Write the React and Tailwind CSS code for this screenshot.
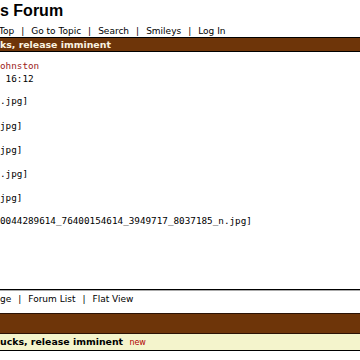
const Sep = () => <span className="mx-[7px]">|</span>;

export default function App() {
  const mono = { fontFamily: '"DejaVu Sans Mono", monospace' };
  return (
    <div className="w-[360px] h-[360px] overflow-hidden bg-white text-black" style={{ fontFamily: '"DejaVu Sans", Verdana, sans-serif' }}>
      <div className="h-[24px] pt-[1px] text-[16px] font-bold leading-[20px]" style={{ fontFamily: '"Liberation Sans", Arial, sans-serif' }}>
        s Forum
      </div>
      <div className="h-[13px] pt-[1px] text-[9px] leading-[12px] whitespace-nowrap -ml-[1px]">
        Top<Sep />Go to Topic<Sep />Search<Sep />Smileys<Sep />Log In
      </div>
      <div className="h-[15px] border-y border-black bg-[#6e3509] text-[#fbf3e0] text-[9.4px] font-bold leading-[13px] whitespace-nowrap">
        ks, release imminent
      </div>
      <div className="pt-[8px] text-[9.3px] leading-[12px] whitespace-pre" style={mono}>
        <div className="text-[#9b1c1c]">ohnston</div>
        <div className="mt-[1px]"> 16:12</div>
        <div className="h-[10px]"></div>
        <div>.jpg]</div>
        <div className="h-[13px]"></div>
        <div>jpg]</div>
        <div className="h-[12px]"></div>
        <div>jpg]</div>
        <div className="h-[12px]"></div>
        <div>.jpg]</div>
        <div className="h-[12px]"></div>
        <div>jpg]</div>
        <div className="h-[11px]"></div>
        <div>0044289614_76400154614_3949717_8037185_n.jpg]</div>
      </div>
      <div className="mt-[62px] border-t border-black border-b border-b-[#aaaaaa] h-[2px]"></div>
      <div className="pt-[2px] h-[22px] text-[9px] leading-[12px] whitespace-nowrap">
        ge<Sep />Forum List<Sep />Flat View
      </div>
      <div className="h-[21px] border-y border-[#2a1205] bg-[#6e3509]"></div>
      <div className="h-[17px] bg-[#f4f4cc] border-b border-black text-[9.4px] font-bold leading-[16px] whitespace-nowrap">
        ucks, release imminent <span className="ml-[3px] text-[8px] font-normal text-[#b00000]">new</span>
      </div>
    </div>
  );
}
